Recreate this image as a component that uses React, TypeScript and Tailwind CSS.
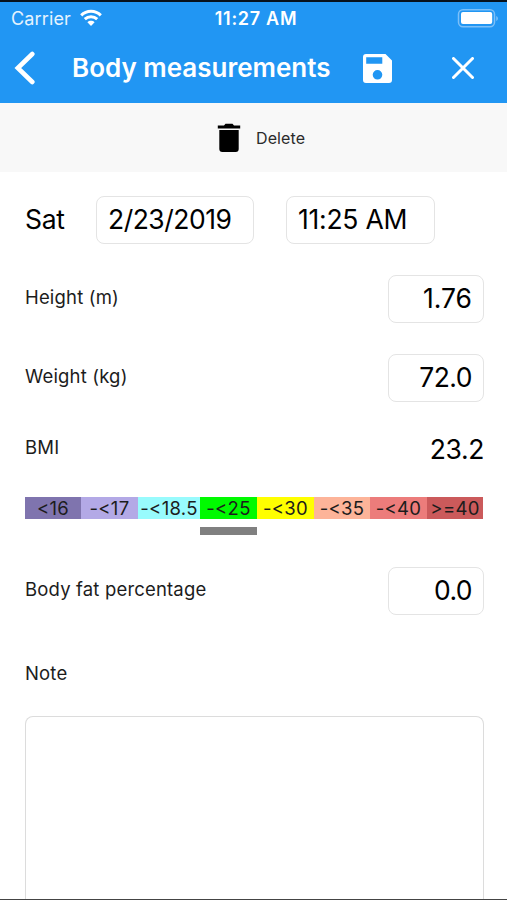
import type { ReactNode } from "react";

const ranges = [
  { label: "<16", style: "w-[56px] bg-[#7f74ae]" },
  { label: "-<17", style: "w-[57px] bg-[#b3a9e6]" },
  { label: "-<18.5", style: "w-[62px] bg-[#98fbfd]" },
  { label: "-<25", style: "w-[57px] bg-[#00fa00]" },
  { label: "-<30", style: "w-[57px] bg-[#ffff00]" },
  { label: "-<35", style: "w-[56px] bg-[#fdb499]" },
  { label: "-<40", style: "w-[57px] bg-[#ec7c7b]" },
  { label: ">=40", style: "w-[56px] bg-[#cb5a5b]" },
];

function Field({ children, className }: { children: ReactNode; className: string }) {
  return (
    <div className={`flex h-12 items-center rounded-lg border border-[#e4e4e4] px-[11px] text-[26.5px] ${className}`}>
      {children}
    </div>
  );
}

function Row({ label, children, className }: { label: string; children?: ReactNode; className: string }) {
  return (
    <div className={`flex items-center justify-between ${className}`}>
      <span className="pb-0.5 text-[18.5px] tracking-[0.17px] text-[#1c1c1c]">{label}</span>
      {children}
    </div>
  );
}

function StatusBar() {
  return (
    <div className="grid h-[33px] grid-cols-3 items-center pl-[11px] pr-[8px]">
      <div className="flex items-center gap-2 text-[18px] tracking-[0.15px] text-[#e5f3fe]">
        <span>Carrier</span>
        <svg width="24" height="18" viewBox="0 0 24 18" fill="none" className="-mt-0.5">
          <path d="M2.2 6.4C7.6.9 16.4.9 21.8 6.4" stroke="#fff" strokeWidth="3" />
          <path d="M5.8 10.2c3.5-3.4 8.9-3.4 12.4 0" stroke="#fff" strokeWidth="3" />
          <path d="M12 17 8.4 13.2c2-1.9 5.2-1.9 7.2 0Z" fill="#fff" />
        </svg>
      </div>
      <span className="pl-0.5 text-center text-[18px] font-semibold tracking-[0.72px]">11:27 AM</span>
      <svg width="42" height="19" viewBox="0 0 42 19" className="justify-self-end">
        <rect x="1.5" y="0.75" width="36" height="17" rx="4.5" fill="none" stroke="#7cc0f9" strokeWidth="1.5" />
        <rect x="4" y="3" width="31.2" height="12" rx="2" fill="#fff" />
        <path d="M39.3 7c2 .8 2 4.2 0 5Z" fill="#86c5fa" />
      </svg>
    </div>
  );
}

function Header() {
  return (
    <div className="flex h-[66px] items-center pl-[14px]">
      <svg width="22" height="34" viewBox="0 0 22 34" fill="none">
        <path d="M18.3 3 3.8 17l14.5 14" stroke="#fff" strokeWidth="4.6" strokeLinecap="round" strokeLinejoin="miter" />
      </svg>
      <h1 className="ml-[36px] w-[259px] whitespace-nowrap pb-px text-[26px] font-semibold">Body measurements</h1>
      <svg width="29" height="29" viewBox="0 0 29 29" className="ml-[32px]">
        <path
          fill="#fff"
          fillRule="evenodd"
          d="M3 0H22.5L29 6.5V26a3 3 0 0 1-3 3H3a3 3 0 0 1-3-3V3a3 3 0 0 1 3-3ZM3.2 3.3V9.7H19.3V3.3ZM14.5 16a4.8 4.8 0 1 0 0 9.6a4.8 4.8 0 0 0 0-9.6Z"
        />
      </svg>
      <svg width="22" height="22" viewBox="0 0 22 22" className="ml-[60px]">
        <path d="M1.5 1.5 20.5 20.5M20.5 1.5 1.5 20.5" stroke="#fff" strokeWidth="3" strokeLinecap="round" />
      </svg>
    </div>
  );
}

export default function App() {
  return (
    <div className="flex h-[900px] w-[507px] flex-col overflow-hidden border-b border-b-[#444] bg-white font-['Inter',sans-serif] text-black">
      <div className="h-[103px] border-t-2 border-[#07121d] bg-[#2196f3] text-white">
        <StatusBar />
        <Header />
      </div>
      <div className="flex h-[69px] items-center bg-[#f8f8f8] pl-[217px] text-[#2b2b2b]">
        <svg width="24" height="30" viewBox="0 0 24 30" fill="#000">
          <path d="M.8 2.4H7L8.5.8h7L17 2.4h6.2v3H.8Z" />
          <path d="M2.3 7h19.4v19a3 3 0 0 1-3 3h-13.4a3 3 0 0 1-3-3Z" />
        </svg>
        <span className="ml-[15px] text-[16px] tracking-[0.1px]">Delete</span>
      </div>
      <div className="flex flex-1 flex-col px-[25px] pr-[23px] pt-6">
        <div className="flex items-center">
          <span className="w-[71px] text-[26.5px] tracking-[-0.3px]">Sat</span>
          <Field className="w-[158px] tracking-[-0.5px]">2/23/2019</Field>
          <Field className="ml-8 w-[149px] tracking-[-0.25px]">11:25 AM</Field>
        </div>
        <Row label="Height (m)" className="mt-[31px]">
          <Field className="w-24 justify-end">1.76</Field>
        </Row>
        <Row label="Weight (kg)" className="mt-[31px]">
          <Field className="w-24 justify-end tracking-[-0.5px]">72.0</Field>
        </Row>
        <Row label="BMI" className="mt-[23px] h-12">
          <span className="pt-0.5 text-[26.5px] tracking-[-0.4px]">23.2</span>
        </Row>
        <div className="mt-[24px] flex">
          {ranges.map((r) => (
            <div key={r.label} className={`flex h-[22px] shrink-0 items-center justify-center whitespace-nowrap pt-0.5 text-[18.5px] tracking-[0.3px] text-[#1c1c1c] ${r.style}`}>
              {r.label}
            </div>
          ))}
        </div>
        <div className="ml-[175px] mt-2 h-2 w-[57px] bg-[#808080]" />
        <Row label="Body fat percentage" className="mt-8">
          <Field className="w-24 justify-end tracking-[-0.6px]">0.0</Field>
        </Row>
        <Row label="Note" className="mt-[44px] h-8" />
        <div className="mt-[25px] flex-1 rounded-t-lg border border-b-0 border-[#dcdcdc]" />
      </div>
    </div>
  );
}
